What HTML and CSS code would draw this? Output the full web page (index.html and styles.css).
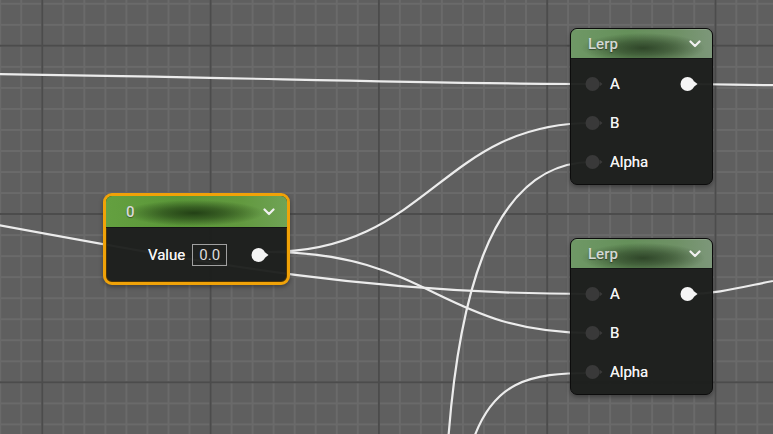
FILE: index.html
```html
<!DOCTYPE html>
<html lang="en">
<head>
<meta charset="utf-8">
<title>Material Graph</title>
<link rel="stylesheet" href="styles.css">
</head>
<body>
<div class="canvas">
  <svg class="wires" width="773" height="434" viewBox="0 0 773 434">
    <g fill="none" stroke="#ececec" stroke-width="2.2" stroke-linecap="round">
      <path d="M -200 72 C 150 74, 400 84, 592 84"/>
      <path d="M 688 84 C 720 84, 740 85, 800 85.5"/>
      <path d="M -100 207 C 200 262, 350 294, 592 294"/>
      <path d="M 268 252 C 430 252, 440 123, 592 123"/>
      <path d="M 268 252 C 430 252, 440 333, 592 333"/>
      <path d="M 445 500 C 452 300, 490 162, 592 162"/>
      <path d="M 470 450 C 490 380, 530 373, 592 373"/>
      <path d="M 688 294 C 730 294, 760 280, 840 270"/>
    </g>
  </svg>

  <div class="node lerp lerp-1">
    <div class="node-header">
      <span class="node-title">Lerp</span>
      <svg class="chevron" width="12" height="8" viewBox="0 0 12 8"><polyline points="1.5,1.5 6,6 10.5,1.5" fill="none" stroke="#f0f0f0" stroke-width="2.2" stroke-linecap="round" stroke-linejoin="round"/></svg>
    </div>
    <div class="node-body">
      <div class="pin-row">
        <svg class="pin-in" width="20" height="16" viewBox="0 0 20 16"><circle cx="7.5" cy="8" r="7" fill="#393939"/><polygon points="14.5,5.5 17.5,8 14.5,10.5" fill="#393939"/></svg>
        <span class="pin-label">A</span>
        <svg class="pin-out" width="20" height="16" viewBox="0 0 20 16"><circle cx="7.5" cy="8" r="7" fill="#f4f4f4"/><polygon points="14,5.2 17.5,8 14,10.8" fill="#f4f4f4"/></svg>
      </div>
      <div class="pin-row">
        <svg class="pin-in" width="20" height="16" viewBox="0 0 20 16"><circle cx="7.5" cy="8" r="7" fill="#393939"/><polygon points="14.5,5.5 17.5,8 14.5,10.5" fill="#393939"/></svg>
        <span class="pin-label">B</span>
      </div>
      <div class="pin-row">
        <svg class="pin-in" width="20" height="16" viewBox="0 0 20 16"><circle cx="7.5" cy="8" r="7" fill="#393939"/><polygon points="14.5,5.5 17.5,8 14.5,10.5" fill="#393939"/></svg>
        <span class="pin-label">Alpha</span>
      </div>
    </div>
  </div>

  <div class="node lerp lerp-2">
    <div class="node-header">
      <span class="node-title">Lerp</span>
      <svg class="chevron" width="12" height="8" viewBox="0 0 12 8"><polyline points="1.5,1.5 6,6 10.5,1.5" fill="none" stroke="#f0f0f0" stroke-width="2.2" stroke-linecap="round" stroke-linejoin="round"/></svg>
    </div>
    <div class="node-body">
      <div class="pin-row">
        <svg class="pin-in" width="20" height="16" viewBox="0 0 20 16"><circle cx="7.5" cy="8" r="7" fill="#393939"/><polygon points="14.5,5.5 17.5,8 14.5,10.5" fill="#393939"/></svg>
        <span class="pin-label">A</span>
        <svg class="pin-out" width="20" height="16" viewBox="0 0 20 16"><circle cx="7.5" cy="8" r="7" fill="#f4f4f4"/><polygon points="14,5.2 17.5,8 14,10.8" fill="#f4f4f4"/></svg>
      </div>
      <div class="pin-row">
        <svg class="pin-in" width="20" height="16" viewBox="0 0 20 16"><circle cx="7.5" cy="8" r="7" fill="#393939"/><polygon points="14.5,5.5 17.5,8 14.5,10.5" fill="#393939"/></svg>
        <span class="pin-label">B</span>
      </div>
      <div class="pin-row">
        <svg class="pin-in" width="20" height="16" viewBox="0 0 20 16"><circle cx="7.5" cy="8" r="7" fill="#393939"/><polygon points="14.5,5.5 17.5,8 14.5,10.5" fill="#393939"/></svg>
        <span class="pin-label">Alpha</span>
      </div>
    </div>
  </div>

  <div class="node const selected">
    <div class="node-header">
      <span class="node-title">0</span>
      <svg class="chevron" width="12" height="8" viewBox="0 0 12 8"><polyline points="1.5,1.5 6,6 10.5,1.5" fill="none" stroke="#f0f0f0" stroke-width="2.2" stroke-linecap="round" stroke-linejoin="round"/></svg>
    </div>
    <div class="node-body">
      <div class="value-row">
        <span class="pin-label">Value</span>
        <span class="value-box">0.0</span>
        <svg class="pin-out" width="20" height="16" viewBox="0 0 20 16"><circle cx="7.5" cy="8" r="7" fill="#f4f4f4"/><polygon points="14,5.2 17.5,8 14,10.8" fill="#f4f4f4"/></svg>
      </div>
    </div>
  </div>
</div>
</body>
</html>
```

FILE: styles.css
```css
html, body {
  margin: 0;
  padding: 0;
}

body {
  width: 773px;
  height: 434px;
  overflow: hidden;
  font-family: Roboto, "Liberation Sans", sans-serif;
  background-color: #5f5f5f;
  background-image:
    linear-gradient(90deg, #4c4c4c 0, #4c4c4c 2px, transparent 2px),
    linear-gradient(0deg, #4c4c4c 0, #4c4c4c 2px, transparent 2px),
    linear-gradient(90deg, #6a6a6a 0, #6a6a6a 2px, transparent 2px),
    linear-gradient(0deg, #6a6a6a 0, #6a6a6a 2px, transparent 2px);
  background-size:
    168.3px 168.3px,
    168.3px 168.3px,
    21.04px 21.04px,
    21.04px 21.04px;
  background-position:
    41.3px 0,
    0 -121.6px,
    20.3px 0,
    0 -16.3px;
}

.canvas {
  position: relative;
  width: 773px;
  height: 434px;
}

.wires {
  position: absolute;
  left: 0;
  top: 0;
}

.node {
  position: absolute;
  display: flex;
  flex-direction: column;
  box-sizing: border-box;
  background: rgba(28, 30, 28, 0.96);
  border: 1px solid #0c0c0c;
  border-radius: 7px;
  overflow: hidden;
  box-shadow: 0 2px 4px rgba(0, 0, 0, 0.35);
}

.lerp {
  width: 143px;
}

.lerp-1 {
  left: 570px;
  top: 28px;
  height: 157px;
}

.lerp-2 {
  left: 570px;
  top: 238px;
  height: 157px;
}

.node-header {
  height: 30px;
  flex: none;
  display: flex;
  align-items: center;
  justify-content: space-between;
  padding: 0 11px 0 17px;
  box-sizing: border-box;
  border-bottom: 1px solid #151615;
  border-top: 1px solid rgba(255, 255, 255, 0.14);
}

.lerp .node-header {
  background:
    radial-gradient(ellipse 62px 15px at 72px 18px, rgba(44, 66, 38, 0.95) 0%, rgba(44, 66, 38, 0.6) 45%, rgba(44, 66, 38, 0) 100%),
    linear-gradient(90deg, #6f9866 0%, #65905a 40%, #6f9166 75%, #7d977a 100%);
}

.node-title {
  color: #d4d8d4;
  font-size: 15px;
  font-weight: 500;
  text-shadow: 0 1px 1px rgba(0, 0, 0, 0.4);
}

.chevron {
  display: block;
}

.node-body {
  flex: 1;
  display: flex;
  flex-direction: column;
  padding-top: 5px;
}

.pin-row {
  height: 39px;
  display: flex;
  align-items: center;
  padding-left: 14px;
}

.pin-in {
  display: block;
  flex: none;
}

.pin-label {
  color: #f2f2f2;
  font-size: 15px;
  font-weight: 400;
  margin-left: 5px;
  text-shadow: 0 0 0.4px #f2f2f2;
}

.pin-row .pin-out {
  display: block;
  margin-left: auto;
  margin-right: 12px;
}

.const {
  left: 103px;
  top: 193px;
  width: 187px;
  height: 92px;
  border: 3px solid #f0a208;
  border-radius: 9px;
  box-shadow: inset 0 0 0 1px #4a3306, 0 2px 4px rgba(0, 0, 0, 0.35);
}

.const .node-header {
  height: 32px;
  padding: 0 12px 0 20px;
  background:
    radial-gradient(ellipse 70px 13px at 88px 17px, rgba(32, 60, 20, 0.95) 0%, rgba(32, 60, 20, 0.6) 45%, rgba(32, 60, 20, 0) 100%),
    linear-gradient(90deg, #64a040 0%, #5a9638 40%, #62993f 75%, #70a356 100%);
  border-top: none;
}

.const .node-title {
  color: #dadada;
}

.const .node-body {
  padding-top: 0;
  justify-content: center;
}

.value-row {
  display: flex;
  align-items: center;
  padding-left: 42px;
  height: 50px;
}

.value-row .pin-label {
  margin-left: 0;
}

.value-box {
  margin-left: 7px;
  width: 35px;
  height: 22px;
  box-sizing: border-box;
  border: 1px solid #a0a0a0;
  color: #dcdcdc;
  font-size: 15px;
  display: flex;
  align-items: center;
  justify-content: center;
}

.value-row .pin-out {
  display: block;
  margin-left: 24px;
}
```
